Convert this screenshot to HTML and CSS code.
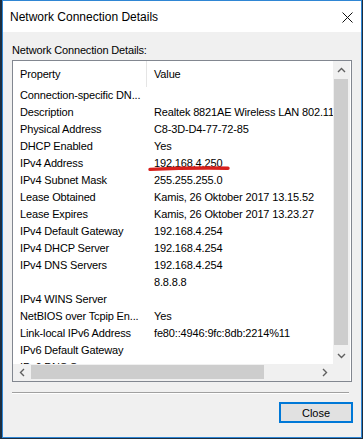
FILE: index.html
```html
<!DOCTYPE html>
<html lang="en">
<head>
  <meta charset="UTF-8">
  <title>Network Connection Details</title>
  <link rel="stylesheet" href="styles.css">
</head>
<body>
  <div class="window">
    <div class="titlebar">
      <span class="title">Network Connection Details</span>
      <svg class="close-x" width="11" height="11" viewBox="0 0 11 11">
        <path d="M0.5 0.5 L10.5 10.5 M10.5 0.5 L0.5 10.5" stroke="#111" stroke-width="1" fill="none"/>
      </svg>
    </div>
    <div class="client">
      <div class="caption">Network Connection Details:</div>
      <div class="listbox">
        <div class="view">
          <div class="header">
            <div class="hcell hprop">Property</div>
            <div class="hcell">Value</div>
          </div>
          <div class="rows" id="rows"></div>
          <svg class="mark" width="84" height="7" viewBox="0 0 84 7">
            <path d="M2 4.4 Q 40 2.6 80 3.2" stroke="#d8201c" stroke-width="3.4" stroke-linecap="round" fill="none"/>
          </svg>
        </div>
        <div class="vscroll">
          <div class="sbtn"><svg width="9" height="6" viewBox="0 0 9 6"><path d="M1 5 L4.5 1.5 L8 5" stroke="#606060" stroke-width="1.4" fill="none"/></svg></div>
          <div class="track"><div class="thumb vthumb"></div></div>
          <div class="sbtn"><svg width="9" height="6" viewBox="0 0 9 6"><path d="M1 1 L4.5 4.5 L8 1" stroke="#606060" stroke-width="1.4" fill="none"/></svg></div>
        </div>
        <div class="hscroll">
          <div class="sbtn"><svg width="6" height="9" viewBox="0 0 6 9"><path d="M5 1 L1.5 4.5 L5 8" stroke="#606060" stroke-width="1.4" fill="none"/></svg></div>
          <div class="track"><div class="thumb hthumb"></div></div>
          <div class="sbtn"><svg width="6" height="9" viewBox="0 0 6 9"><path d="M1 1 L4.5 4.5 L1 8" stroke="#606060" stroke-width="1.4" fill="none"/></svg></div>
        </div>
        <div class="corner"></div>
      </div>
      <div class="sep"></div>
      <div class="buttons">
        <button class="btn">Close</button>
      </div>
    </div>
  </div>
  <script>
    const details = [
      ['Connection-specific DN...', ''],
      ['Description', 'Realtek 8821AE Wireless LAN 802.11ac PCI-E NIC'],
      ['Physical Address', 'C8-3D-D4-77-72-85'],
      ['DHCP Enabled', 'Yes'],
      ['IPv4 Address', '192.168.4.250'],
      ['IPv4 Subnet Mask', '255.255.255.0'],
      ['Lease Obtained', 'Kamis, 26 Oktober 2017 13.15.52'],
      ['Lease Expires', 'Kamis, 26 Oktober 2017 13.23.27'],
      ['IPv4 Default Gateway', '192.168.4.254'],
      ['IPv4 DHCP Server', '192.168.4.254'],
      ['IPv4 DNS Servers', '192.168.4.254'],
      ['', '8.8.8.8'],
      ['IPv4 WINS Server', ''],
      ['NetBIOS over Tcpip En...', 'Yes'],
      ['Link-local IPv6 Address', 'fe80::4946:9fc:8db:2214%11'],
      ['IPv6 Default Gateway', ''],
      ['IPv6 DNS Servers', '']
    ];
    document.getElementById('rows').innerHTML = details.map(d =>
      `<div class="row"><div class="cell prop">${d[0]}</div><div class="cell val">${d[1]}</div></div>`
    ).join('');
  </script>
</body>
</html>
```

FILE: styles.css
```css
* { box-sizing: border-box; margin: 0; padding: 0; }
body { background: #1c2e40; font-family: "Liberation Sans", Arial, sans-serif; font-size: 11px; letter-spacing: -0.15px; color: #000; width: 363px; height: 439px; overflow: hidden; }
.window { margin-left: 2px; width: 360px; height: 438px; border: 1px solid #2f86d4; background: #f0f0f0; display: flex; flex-direction: column; }
.titlebar { height: 31px; background: #fff; display: flex; align-items: center; justify-content: space-between; padding: 0 8px 0 7px; }
.title { font-size: 12px; letter-spacing: 0; color: #000; }
.close-x { display: block; margin-top: 1px; }
.client { flex: 1; padding: 11px 8px 0 9px; display: flex; flex-direction: column; }
.caption { height: 14px; line-height: 14px; margin-bottom: 3px; }
.listbox { margin-right: 1px; height: 322px; border: 1px solid #828790; background: #fff;
  display: grid; grid-template-columns: 320px 17px; grid-template-rows: 303px 17px; }
.view { position: relative; overflow: hidden; white-space: nowrap; }
.header { display: flex; height: 26px; }
.hcell { line-height: 26px; padding-left: 7px; }
.hprop { width: 134px; border-right: 1px solid #e5e5e5; }
.row { display: flex; height: 17px; line-height: 17px; }
.cell { padding-left: 7px; flex: none; }
.prop { width: 134px; overflow: hidden; }
.mark { position: absolute; left: 135px; top: 104px; }
.vscroll { background: #f0f0f0; display: flex; flex-direction: column; }
.hscroll { background: #f0f0f0; display: flex; }
.sbtn { width: 17px; height: 17px; flex: none; display: flex; align-items: center; justify-content: center; }
.track { flex: 1; display: flex; }
.vscroll .track { flex-direction: column; padding: 1px 2px 0 1px; }
.hscroll .track { padding: 1px 0 2px 1px; }
.thumb { background: #cdcdcd; }
.vthumb { height: 266px; }
.hthumb { width: 233px; }
.corner { background: #f0f0f0; }
.sep { margin-top: 10px; width: 337px; height: 2px; border-top: 1px solid #a0a0a0; border-bottom: 1px solid #fff; }
.buttons { display: flex; justify-content: flex-end; margin-top: 8px; }
.btn { width: 74px; height: 21px; border: 2px solid #0078d7; background: #e1e1e1; font-family: "Liberation Sans", Arial, sans-serif; font-size: 11px; color: #000; }
```
